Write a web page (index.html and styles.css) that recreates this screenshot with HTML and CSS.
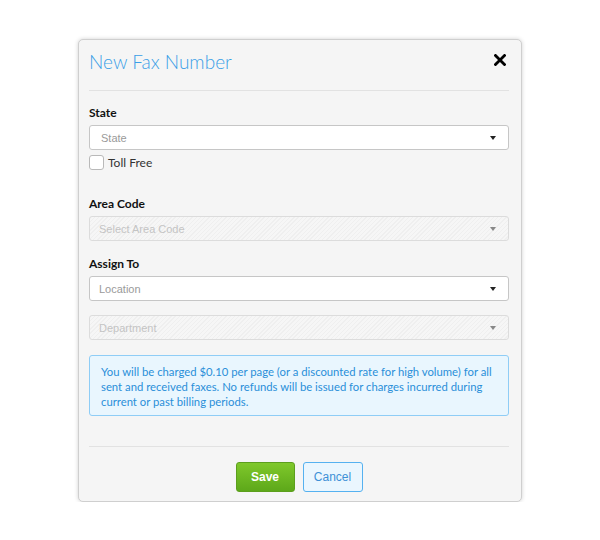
FILE: index.html
```html
<!DOCTYPE html>
<html>
<head>
<meta charset="utf-8">
<link rel="stylesheet" href="styles.css">
</head>
<body>
<div class="modal">
  <div class="header">
    <h1 class="title">New Fax Number</h1>
    <svg class="close" width="12" height="12" viewBox="0 0 12 12"><path d="M1.5 1.5 L10.5 10.5 M10.5 1.5 L1.5 10.5" stroke="#000" stroke-width="2.8" stroke-linecap="square"/></svg>
  </div>
  <div class="body">
    <div class="label">State</div>
    <div class="select state"><span>State</span><i class="caret"></i></div>
    <div class="check-row"><span class="checkbox"></span><span class="check-text">Toll Free</span></div>

    <div class="label l-area">Area Code</div>
    <div class="select disabled"><span>Select Area Code</span><i class="caret"></i></div>

    <div class="label l-assign">Assign To</div>
    <div class="select"><span>Location</span><i class="caret"></i></div>
    <div class="select disabled dept"><span>Department</span><i class="caret"></i></div>

    <div class="info">You will be charged $0.10 per page (or a discounted rate for high volume) for all sent and received faxes. No refunds will be issued for charges incurred during current or past billing periods.</div>
  </div>
  <div class="footer">
    <button class="btn save">Save</button>
    <button class="btn cancel">Cancel</button>
  </div>
</div>
</body>
</html>
```
FILE: styles.css
```css
html, body { margin: 0; padding: 0; background: #fff; }
body { font-family: Lato, "Liberation Sans", sans-serif; }

.modal {
  box-sizing: border-box;
  width: 444px;
  height: 463px;
  margin: 39px 0 0 78px;
  padding: 0 12px 0 10px;
  background: #f5f5f5;
  border: 1px solid #cfcfcf;
  border-radius: 5px;
  box-shadow: 0 0 4px rgba(0,0,0,0.18);
}

.header {
  height: 50px;
  border-bottom: 1px solid #e2e2e2;
  display: flex;
  justify-content: space-between;
  align-items: flex-start;
}
.title {
  margin: 9px 0 0 0;
  font-family: Lato, sans-serif;
  font-weight: 300;
  font-size: 19px;
  line-height: 26px;
  color: #3a9fe7;
}
.close { margin: 14px 3px 0 0; }

.body { padding-top: 14px; }

.label {
  font-family: Lato, sans-serif;
  font-weight: 700;
  font-size: 12px;
  line-height: 16px;
  color: #111;
  margin-bottom: 4px;
}
.l-area { margin-top: 26px; }
.l-assign { margin-top: 15px; }

.select {
  box-sizing: border-box;
  height: 25px;
  border: 1px solid #c6c6c6;
  border-radius: 3px;
  background: #fff;
  display: flex;
  align-items: center;
  justify-content: space-between;
  padding: 0 9px 0 9px;
  font-family: "Liberation Sans", Arial, sans-serif;
  font-size: 11px;
  color: #9a9a9a;
}
.select.state { padding-left: 11px; }
.select.disabled {
  border-color: #dcdcdc;
  color: #c4c4c4;
  background: repeating-linear-gradient(135deg, #efefef 0 1px, #f6f6f6 1px 3px);
}
.select.dept { margin-top: 14px; }

.caret {
  width: 0; height: 0;
  border-left: 3.5px solid transparent;
  border-right: 3.5px solid transparent;
  border-top: 4px solid #222;
  margin-right: 3px;
}
.disabled .caret { border-top-color: #888; }

.check-row {
  display: flex;
  align-items: center;
  margin-top: 5px;
  height: 15px;
}
.checkbox {
  box-sizing: border-box;
  width: 15px; height: 15px;
  border: 1px solid #b9b9b9;
  border-radius: 3px;
  background: #fff;
}
.check-text {
  margin-left: 4px;
  font-size: 12px;
  color: #333;
}

.info {
  margin-top: 15px;
  border: 1px solid #8fcdf6;
  border-radius: 3px;
  background: #e9f6fe;
  padding: 8px 10px 6px 11px;
  font-size: 11.3px;
  line-height: 15px;
  color: #2a8fd9;
}

.footer {
  margin-top: 30px;
  border-top: 1px solid #e2e2e2;
  padding-top: 15px;
  display: flex;
  justify-content: center;
  gap: 8px;
}
.btn {
  box-sizing: border-box;
  height: 30px;
  border-radius: 3px;
  font-family: "Liberation Sans", Arial, sans-serif;
  font-size: 12px;
  padding: 0;
}
.save {
  width: 59px;
  background: linear-gradient(#7fc82b, #5da81a);
  border: 1px solid #5c9f1d;
  color: #fff;
  font-weight: 700;
}
.cancel {
  width: 60px;
  background: #eaf6fe;
  border: 1px solid #55b1f0;
  color: #3d90d6;
}
```
